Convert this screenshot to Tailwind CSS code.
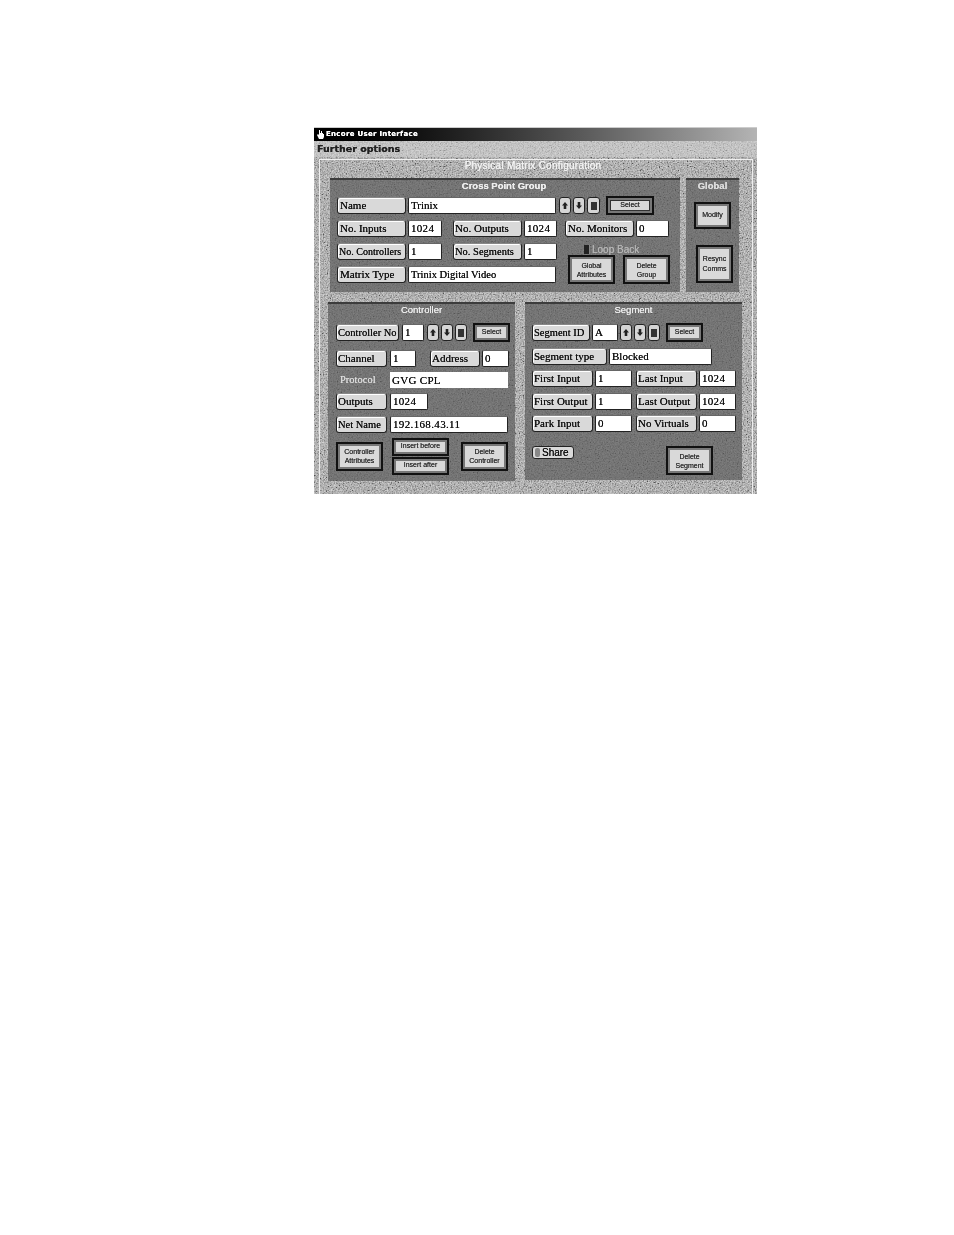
<!doctype html>
<html lang="en">
<head>
<meta charset="UTF-8" />
<title>Encore User Interface</title>
<script src="https://cdn.jsdelivr.net/npm/@tailwindcss/browser@4"></script>
</head>
<body class="bg-white min-h-screen">
<svg class="absolute w-0 h-0">
  <filter id="grain" x="0" y="0" width="100%" height="100%">
    <feTurbulence type="fractalNoise" baseFrequency="0.75" numOctaves="2" seed="4"/>
    <feColorMatrix type="matrix" values="1.7 0 0 0 -0.35  1.7 0 0 0 -0.35  1.7 0 0 0 -0.35  0 0 0 0 1"/>
  </filter>
</svg>

<div class="pt-[127px] pl-[314px]">
<div class="w-[443px] h-[367px] flex flex-col bg-[#a6a6a6] overflow-hidden border-t border-[#ccc] blur-[0.45px] [text-shadow:0_0_0.4px_currentColor] font-['Liberation_Serif',serif] text-[11px] text-[#111]">

  <!-- title bar -->
  <div class="h-[13px] shrink-0 flex items-center pl-[3px] bg-linear-to-r from-black via-[#444] to-[#b4b4b4] text-white font-['DejaVu_Sans',sans-serif] font-bold text-[7px] tracking-[0.3px]">
    <svg class="w-[7px] h-[9px] mr-[2px]" viewBox="0 0 7 9"><path d="M2 0h1v3h1V1h1v2h1v1h1v3L6 9H2L0 5l1-1 1 1z" fill="#fff"/></svg>
    Encore User Interface
  </div>

  <!-- menu bar -->
  <div class="relative h-[16px] shrink-0 flex items-center pl-[3px] bg-[#c6c6c6] font-['DejaVu_Sans',sans-serif] font-bold text-[9.5px] text-[#222]">
    <svg class="absolute inset-0 w-full h-full opacity-25"><rect width="100%" height="100%" filter="url(#grain)"/></svg>
    <span class="relative">Further options</span>
  </div>

  <!-- main -->
  <div class="relative grow pt-[2px] pl-[5px]">
    <svg class="absolute inset-0 w-full h-full opacity-50"><rect width="100%" height="100%" filter="url(#grain)"/></svg>
    <div class="relative w-[434px] h-[340px] border-t border-l border-r border-[#eee]">
      <div class="h-[18px] text-center pr-[6px] font-['Liberation_Sans',sans-serif] text-[10px] leading-[11px] text-[#f2f2f2] tracking-[0.25px]">Physical Matrix Configuration</div>

      <div class="flex pl-[10px]">
        <!-- cross point group -->
        <div class="relative w-[350px] h-[114px] bg-[#555] border-t-2 border-[#3c3c3c]">
          <svg class="absolute inset-0 w-full h-full opacity-25 mix-blend-screen"><rect width="100%" height="100%" filter="url(#grain)"/></svg>
          <div class="relative">
            <div class="h-[17px] text-center pr-[2px] font-['Liberation_Sans',sans-serif] font-bold text-[9.5px] leading-[11px] text-[#eee]">Cross Point Group</div>
            <div class="flex items-center h-[17px] pl-[7px]">
              <div class="w-[69px] h-[17px] flex items-center px-[2px] bg-[#d9d9d9] border border-[#222] border-t-[#888] rounded-[3px] shadow-[inset_1px_1px_0_#fff]">Name</div>
              <div class="w-[148px] h-[17px] ml-[2px] flex items-center px-[2px] bg-white border border-[#222] border-t-[#666] rounded-[2px]">Trinix</div>
              <div class="w-[12px] h-[17px] ml-[3px] flex items-center justify-center bg-[#d5d5d5] border border-[#222] rounded-[3px]"><svg class="w-[6px] h-[7px]" viewBox="0 0 7 8"><path d="M3.5 0 7 4H5v4H2V4H0z" fill="#222"/></svg></div>
              <div class="w-[12px] h-[17px] ml-[2px] flex items-center justify-center bg-[#d5d5d5] border border-[#222] rounded-[3px]"><svg class="w-[6px] h-[7px]" viewBox="0 0 7 8"><path d="M3.5 8 7 4H5V0H2v4H0z" fill="#222"/></svg></div>
              <div class="w-[13px] h-[17px] ml-[2px] flex items-center justify-center bg-[#d5d5d5] border border-[#222] rounded-[3px]"><div class="w-[6px] h-[8px] bg-[#333]"></div></div>
              <div class="w-[48px] h-[19px] ml-[6px] flex items-center justify-center p-[2px] bg-[#777] border-2 border-[#111] font-['Liberation_Sans',sans-serif] text-[7px] text-[#333]"><div class="w-full h-full flex items-center justify-center bg-[#d9d9d9] border border-[#333]">Select</div></div>
            </div>
            <div class="flex items-center h-[17px] mt-[6px] pl-[7px]">
              <div class="w-[69px] h-[17px] flex items-center px-[2px] bg-[#d9d9d9] border border-[#222] border-t-[#888] rounded-[3px] shadow-[inset_1px_1px_0_#fff]">No. Inputs</div>
              <div class="w-[34px] h-[17px] ml-[2px] flex items-center px-[2px] bg-white border border-[#222] border-t-[#666] rounded-[2px] tracking-[0.3px]">1024</div>
              <div class="w-[69px] h-[17px] ml-[11px] flex items-center px-[1px] bg-[#d9d9d9] border border-[#222] border-t-[#888] rounded-[3px] shadow-[inset_1px_1px_0_#fff]">No. Outputs</div>
              <div class="w-[33px] h-[17px] ml-[2px] flex items-center px-[2px] bg-white border border-[#222] border-t-[#666] rounded-[2px] tracking-[0.3px]">1024</div>
              <div class="w-[69px] h-[17px] ml-[8px] flex items-center px-[2px] bg-[#d9d9d9] border border-[#222] border-t-[#888] rounded-[3px] shadow-[inset_1px_1px_0_#fff]">No. Monitors</div>
              <div class="w-[33px] h-[17px] ml-[2px] flex items-center px-[2px] bg-white border border-[#222] border-t-[#666] rounded-[2px]">0</div>
            </div>
            <div class="flex mt-[6px] pl-[7px]">
              <div class="w-[227px]">
                <div class="flex items-center h-[17px]">
                  <div class="w-[69px] h-[17px] flex items-center pl-[1px] bg-[#d9d9d9] border border-[#222] border-t-[#888] rounded-[3px] shadow-[inset_1px_1px_0_#fff] whitespace-nowrap text-[10px]">No. Controllers</div>
                  <div class="w-[34px] h-[17px] ml-[2px] flex items-center px-[2px] bg-white border border-[#222] border-t-[#666] rounded-[2px]">1</div>
                  <div class="w-[69px] h-[17px] ml-[11px] flex items-center px-[1px] bg-[#d9d9d9] border border-[#222] border-t-[#888] rounded-[3px] shadow-[inset_1px_1px_0_#fff] whitespace-nowrap text-[10.5px]">No. Segments</div>
                  <div class="w-[33px] h-[17px] ml-[2px] flex items-center px-[2px] bg-white border border-[#222] border-t-[#666] rounded-[2px]">1</div>
                </div>
                <div class="flex items-center h-[17px] mt-[6px]">
                  <div class="w-[69px] h-[17px] flex items-center px-[2px] bg-[#d9d9d9] border border-[#222] border-t-[#888] rounded-[3px] shadow-[inset_1px_1px_0_#fff]">Matrix Type</div>
                  <div class="w-[148px] h-[17px] ml-[2px] flex items-center px-[2px] bg-white border border-[#222] border-t-[#666] rounded-[2px] text-[10.5px]">Trinix Digital Video</div>
                </div>
              </div>
              <div class="w-[110px] pl-[4px]">
                <div class="h-[12px] flex items-center pl-[16px] font-['Liberation_Sans',sans-serif] text-[10px] text-[#b4b4b4]"><div class="w-[6px] h-[9px] mr-[2px] bg-[#222] border-r border-[#888]"></div>Loop Back</div>
                <div class="flex">
                  <div class="w-[47px] h-[29px] p-[2px] bg-[#777] border-2 border-[#111] font-['Liberation_Sans',sans-serif] text-[7px] leading-[9px] text-[#333]"><div class="w-full h-full flex items-center justify-center text-center bg-[#d9d9d9]">Global<br>Attributes</div></div>
                  <div class="w-[47px] h-[29px] ml-[8px] p-[2px] bg-[#777] border-2 border-[#111] font-['Liberation_Sans',sans-serif] text-[7px] leading-[9px] text-[#333]"><div class="w-full h-full flex items-center justify-center text-center bg-[#d9d9d9]">Delete<br>Group</div></div>
                </div>
              </div>
            </div>
          </div>
        </div>

        <!-- global -->
        <div class="relative w-[53px] h-[114px] ml-[6px] bg-[#555] border-t-2 border-[#3c3c3c]">
          <svg class="absolute inset-0 w-full h-full opacity-25 mix-blend-screen"><rect width="100%" height="100%" filter="url(#grain)"/></svg>
          <div class="relative">
            <div class="h-[22px] text-center font-['Liberation_Sans',sans-serif] font-bold text-[9.5px] leading-[11px] text-[#ddd]">Global</div>
            <div class="w-[37px] h-[27px] ml-[8px] p-[2px] bg-[#777] border-2 border-[#111] font-['Liberation_Sans',sans-serif] text-[7px] text-[#333]"><div class="w-full h-full flex items-center justify-center bg-[#d9d9d9]">Modify</div></div>
            <div class="w-[37px] h-[38px] ml-[10px] mt-[16px] p-[2px] bg-[#777] border-2 border-[#111] font-['Liberation_Sans',sans-serif] text-[7px] leading-[10px] text-[#333]"><div class="w-full h-full flex items-center justify-center text-center bg-[#d9d9d9]">Resync<br>Comms</div></div>
          </div>
        </div>
      </div>

      <div class="flex pl-[8px] mt-[10px]">
        <!-- controller -->
        <div class="relative w-[187px] h-[179px] bg-[#555] border-t-2 border-[#3c3c3c]">
          <svg class="absolute inset-0 w-full h-full opacity-25 mix-blend-screen"><rect width="100%" height="100%" filter="url(#grain)"/></svg>
          <div class="relative pl-[8px]">
            <div class="h-[20px] pr-[8px] text-center font-['Liberation_Sans',sans-serif] text-[9.5px] leading-[11px] text-[#eee]">Controller</div>
            <div class="flex items-center h-[17px]">
              <div class="w-[63px] h-[17px] flex items-center pl-[1px] bg-[#d9d9d9] border border-[#222] border-t-[#888] rounded-[3px] shadow-[inset_1px_1px_0_#fff] whitespace-nowrap text-[10.5px]">Controller No</div>
              <div class="w-[22px] h-[17px] ml-[3px] flex items-center px-[2px] bg-white border border-[#222] border-t-[#666] rounded-[2px]">1</div>
              <div class="w-[12px] h-[17px] ml-[3px] flex items-center justify-center bg-[#d5d5d5] border border-[#222] rounded-[3px]"><svg class="w-[6px] h-[7px]" viewBox="0 0 7 8"><path d="M3.5 0 7 4H5v4H2V4H0z" fill="#222"/></svg></div>
              <div class="w-[12px] h-[17px] ml-[2px] flex items-center justify-center bg-[#d5d5d5] border border-[#222] rounded-[3px]"><svg class="w-[6px] h-[7px]" viewBox="0 0 7 8"><path d="M3.5 8 7 4H5V0H2v4H0z" fill="#222"/></svg></div>
              <div class="w-[12px] h-[17px] ml-[2px] flex items-center justify-center bg-[#d5d5d5] border border-[#222] rounded-[3px]"><div class="w-[6px] h-[8px] bg-[#333]"></div></div>
              <div class="w-[37px] h-[19px] ml-[6px] p-[2px] bg-[#777] border-2 border-[#111] font-['Liberation_Sans',sans-serif] text-[7px] text-[#333]"><div class="w-full h-full flex items-center justify-center bg-[#d9d9d9]">Select</div></div>
            </div>
            <div class="flex items-center h-[17px] mt-[9px]">
              <div class="w-[51px] h-[17px] flex items-center px-[1px] bg-[#d9d9d9] border border-[#222] border-t-[#888] rounded-[3px] shadow-[inset_1px_1px_0_#fff]">Channel</div>
              <div class="w-[26px] h-[17px] ml-[3px] flex items-center px-[2px] bg-white border border-[#222] border-t-[#666] rounded-[2px]">1</div>
              <div class="w-[50px] h-[17px] ml-[14px] flex items-center px-[1px] bg-[#d9d9d9] border border-[#222] border-t-[#888] rounded-[3px] shadow-[inset_1px_1px_0_#fff]">Address</div>
              <div class="w-[27px] h-[17px] ml-[2px] flex items-center px-[2px] bg-white border border-[#222] border-t-[#666] rounded-[2px]">0</div>
            </div>
            <div class="flex items-center h-[16px] mt-[5px]">
              <div class="w-[51px] pl-[4px] text-[#ddd] text-[10.5px]">Protocol</div>
              <div class="w-[118px] h-[16px] ml-[3px] flex items-center px-[2px] bg-white tracking-[0.3px]">GVG CPL</div>
            </div>
            <div class="flex items-center h-[17px] mt-[5px]">
              <div class="w-[51px] h-[17px] flex items-center px-[1px] bg-[#d9d9d9] border border-[#222] border-t-[#888] rounded-[3px] shadow-[inset_1px_1px_0_#fff]">Outputs</div>
              <div class="w-[38px] h-[17px] ml-[3px] flex items-center px-[2px] bg-white border border-[#222] border-t-[#666] rounded-[2px] tracking-[0.3px]">1024</div>
            </div>
            <div class="flex items-center h-[17px] mt-[6px]">
              <div class="w-[51px] h-[17px] flex items-center px-[1px] bg-[#d9d9d9] border border-[#222] border-t-[#888] rounded-[3px] shadow-[inset_1px_1px_0_#fff] whitespace-nowrap text-[10.5px]">Net Name</div>
              <div class="w-[118px] h-[17px] ml-[3px] flex items-center px-[2px] bg-white border border-[#222] border-t-[#666] rounded-[2px] tracking-[0.35px]">192.168.43.11</div>
            </div>
            <div class="flex items-center mt-[4px] h-[38px]">
              <div class="w-[47px] h-[29px] p-[2px] bg-[#777] border-2 border-[#111] font-['Liberation_Sans',sans-serif] text-[7px] leading-[9px] text-[#333]"><div class="w-full h-full flex items-center justify-center text-center bg-[#d9d9d9]">Controller<br>Attributes</div></div>
              <div class="w-[57px] ml-[9px] flex flex-col gap-[1px] font-['Liberation_Sans',sans-serif] text-[7px] text-[#333]">
                <div class="h-[18px] p-[2px] bg-[#777] border-2 border-[#111]"><div class="w-full h-full flex items-center justify-center bg-[#d9d9d9]">Insert before</div></div>
                <div class="h-[18px] p-[2px] bg-[#777] border-2 border-[#111]"><div class="w-full h-full flex items-center justify-center bg-[#d9d9d9]">Insert after</div></div>
              </div>
              <div class="w-[47px] h-[29px] ml-[12px] p-[2px] bg-[#777] border-2 border-[#111] font-['Liberation_Sans',sans-serif] text-[7px] leading-[9px] text-[#333]"><div class="w-full h-full flex items-center justify-center text-center bg-[#d9d9d9]">Delete<br>Controller</div></div>
            </div>
          </div>
        </div>

        <!-- segment -->
        <div class="relative w-[217px] h-[178px] ml-[10px] bg-[#555] border-t-2 border-[#3c3c3c]">
          <svg class="absolute inset-0 w-full h-full opacity-25 mix-blend-screen"><rect width="100%" height="100%" filter="url(#grain)"/></svg>
          <div class="relative pl-[7px]">
            <div class="h-[20px] pr-[7px] text-center font-['Liberation_Sans',sans-serif] text-[9.5px] leading-[11px] text-[#eee]">Segment</div>
            <div class="flex items-center h-[17px]">
              <div class="w-[58px] h-[17px] flex items-center pl-[1px] bg-[#d9d9d9] border border-[#222] border-t-[#888] rounded-[3px] shadow-[inset_1px_1px_0_#fff] whitespace-nowrap text-[10.5px]">Segment ID</div>
              <div class="w-[26px] h-[17px] ml-[2px] flex items-center px-[2px] bg-white border border-[#222] border-t-[#666] rounded-[2px]">A</div>
              <div class="w-[12px] h-[17px] ml-[2px] flex items-center justify-center bg-[#d5d5d5] border border-[#222] rounded-[3px]"><svg class="w-[6px] h-[7px]" viewBox="0 0 7 8"><path d="M3.5 0 7 4H5v4H2V4H0z" fill="#222"/></svg></div>
              <div class="w-[12px] h-[17px] ml-[2px] flex items-center justify-center bg-[#d5d5d5] border border-[#222] rounded-[3px]"><svg class="w-[6px] h-[7px]" viewBox="0 0 7 8"><path d="M3.5 8 7 4H5V0H2v4H0z" fill="#222"/></svg></div>
              <div class="w-[12px] h-[17px] ml-[2px] flex items-center justify-center bg-[#d5d5d5] border border-[#222] rounded-[3px]"><div class="w-[6px] h-[8px] bg-[#333]"></div></div>
              <div class="w-[37px] h-[19px] ml-[6px] p-[2px] bg-[#777] border-2 border-[#111] font-['Liberation_Sans',sans-serif] text-[7px] text-[#333]"><div class="w-full h-full flex items-center justify-center bg-[#d9d9d9]">Select</div></div>
            </div>
            <div class="flex items-center h-[17px] mt-[7px]">
              <div class="w-[75px] h-[17px] flex items-center px-[1px] bg-[#d9d9d9] border border-[#222] border-t-[#888] rounded-[3px] shadow-[inset_1px_1px_0_#fff]">Segment type</div>
              <div class="w-[103px] h-[17px] ml-[2px] flex items-center px-[2px] bg-white border border-[#222] border-t-[#666] rounded-[2px]">Blocked</div>
            </div>
            <div class="flex items-center h-[17px] mt-[5px]">
              <div class="w-[61px] h-[17px] flex items-center px-[1px] bg-[#d9d9d9] border border-[#222] border-t-[#888] rounded-[3px] shadow-[inset_1px_1px_0_#fff]">First Input</div>
              <div class="w-[37px] h-[17px] ml-[2px] flex items-center px-[2px] bg-white border border-[#222] border-t-[#666] rounded-[2px]">1</div>
              <div class="w-[61px] h-[17px] ml-[4px] flex items-center px-[1px] bg-[#d9d9d9] border border-[#222] border-t-[#888] rounded-[3px] shadow-[inset_1px_1px_0_#fff]">Last Input</div>
              <div class="w-[37px] h-[17px] ml-[2px] flex items-center px-[2px] bg-white border border-[#222] border-t-[#666] rounded-[2px] tracking-[0.3px]">1024</div>
            </div>
            <div class="flex items-center h-[17px] mt-[6px]">
              <div class="w-[61px] h-[17px] flex items-center px-[1px] bg-[#d9d9d9] border border-[#222] border-t-[#888] rounded-[3px] shadow-[inset_1px_1px_0_#fff] whitespace-nowrap">First Output</div>
              <div class="w-[37px] h-[17px] ml-[2px] flex items-center px-[2px] bg-white border border-[#222] border-t-[#666] rounded-[2px]">1</div>
              <div class="w-[61px] h-[17px] ml-[4px] flex items-center px-[1px] bg-[#d9d9d9] border border-[#222] border-t-[#888] rounded-[3px] shadow-[inset_1px_1px_0_#fff] whitespace-nowrap">Last Output</div>
              <div class="w-[37px] h-[17px] ml-[2px] flex items-center px-[2px] bg-white border border-[#222] border-t-[#666] rounded-[2px] tracking-[0.3px]">1024</div>
            </div>
            <div class="flex items-center h-[17px] mt-[5px]">
              <div class="w-[61px] h-[17px] flex items-center px-[1px] bg-[#d9d9d9] border border-[#222] border-t-[#888] rounded-[3px] shadow-[inset_1px_1px_0_#fff]">Park Input</div>
              <div class="w-[37px] h-[17px] ml-[2px] flex items-center px-[2px] bg-white border border-[#222] border-t-[#666] rounded-[2px]">0</div>
              <div class="w-[61px] h-[17px] ml-[4px] flex items-center px-[1px] bg-[#d9d9d9] border border-[#222] border-t-[#888] rounded-[3px] shadow-[inset_1px_1px_0_#fff]">No Virtuals</div>
              <div class="w-[37px] h-[17px] ml-[2px] flex items-center px-[2px] bg-white border border-[#222] border-t-[#666] rounded-[2px]">0</div>
            </div>
            <div class="flex items-start mt-[14px]">
              <div class="w-[42px] h-[13px] flex items-center px-[2px] bg-[#d9d9d9] border border-[#222] rounded-[3px] font-['Liberation_Sans',sans-serif] text-[10px]"><div class="w-[5px] h-[9px] mr-[2px] bg-[#888] rounded-[2px]"></div>Share</div>
              <div class="w-[47px] h-[29px] ml-[92px] p-[2px] bg-[#777] border-2 border-[#111] font-['Liberation_Sans',sans-serif] text-[7px] leading-[9px] text-[#333]"><div class="w-full h-full flex items-center justify-center text-center bg-[#d9d9d9]">Delete<br>Segment</div></div>
            </div>
          </div>
        </div>
      </div>
    </div>
  </div>
</div>
</div>
</body>
</html>
